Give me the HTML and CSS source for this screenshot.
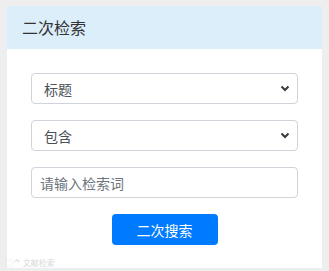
FILE: index.html
```html
<!DOCTYPE html>
<html lang="zh">
<head>
<meta charset="utf-8">
<link rel="stylesheet" href="styles.css">
</head>
<body>
<div class="card">
  <div class="card-header">二次检索</div>
  <div class="card-body">
    <div class="select">
      <span>标题</span>
      <svg class="chev" width="10" height="7" viewBox="0 0 10 7"><path d="M1.5 1.5 L5 5 L8.5 1.5" fill="none" stroke="#343a40" stroke-width="2"/></svg>
    </div>
    <div class="select">
      <span>包含</span>
      <svg class="chev" width="10" height="7" viewBox="0 0 10 7"><path d="M1.5 1.5 L5 5 L8.5 1.5" fill="none" stroke="#343a40" stroke-width="2"/></svg>
    </div>
    <input class="input" type="text" placeholder="请输入检索词">
    <div class="btn-row"><button class="btn">二次搜索</button></div>
  </div>
</div>
<div class="watermark">⿳⺈ 文献检索</div>
</body>
</html>
```
FILE: styles.css
```css
html, body {
  margin: 0;
  padding: 0;
  background: #eeeeee;
  font-family: "Noto Sans CJK SC", "Noto Sans", sans-serif;
}
body {
  width: 329px;
  height: 271px;
  overflow: hidden;
  position: relative;
}
.card {
  margin: 6px 0 0 7px;
  width: 315px;
  height: 262px;
  background: #fff;
  display: flex;
  flex-direction: column;
}
.card-header {
  height: 43px;
  background: #dbeefa;
  color: #333;
  font-size: 16px;
  line-height: 43px;
  padding-left: 15px;
}
.card-body {
  padding: 24px 24px 0 24px;
  display: flex;
  flex-direction: column;
  gap: 16px;
}
.select {
  height: 31px;
  box-sizing: border-box;
  border: 1px solid #ced4da;
  border-radius: 4px;
  display: flex;
  align-items: center;
  justify-content: space-between;
  padding: 0 7px 0 12px;
  font-size: 14px;
  color: #495057;
}
.input {
  height: 31px;
  box-sizing: border-box;
  border: 1px solid #ced4da;
  border-radius: 4px;
  padding: 0 8px;
  font-size: 14px;
  font-family: "Noto Sans CJK SC", "Noto Sans", sans-serif;
  color: #495057;
  outline: none;
  margin: 0;
  width: 100%;
}
.input::placeholder {
  color: #6c757d;
}
.btn-row {
  display: flex;
  justify-content: center;
}
.btn {
  width: 106px;
  height: 31px;
  border: none;
  border-radius: 4px;
  background: #007bff;
  color: #fff;
  font-size: 14px;
  font-family: "Noto Sans CJK SC", "Noto Sans", sans-serif;
  padding: 0;
}
.watermark {
  position: absolute;
  left: 5px;
  top: 257px;
  font-size: 8px;
  color: #d8d8d8;
}
```
